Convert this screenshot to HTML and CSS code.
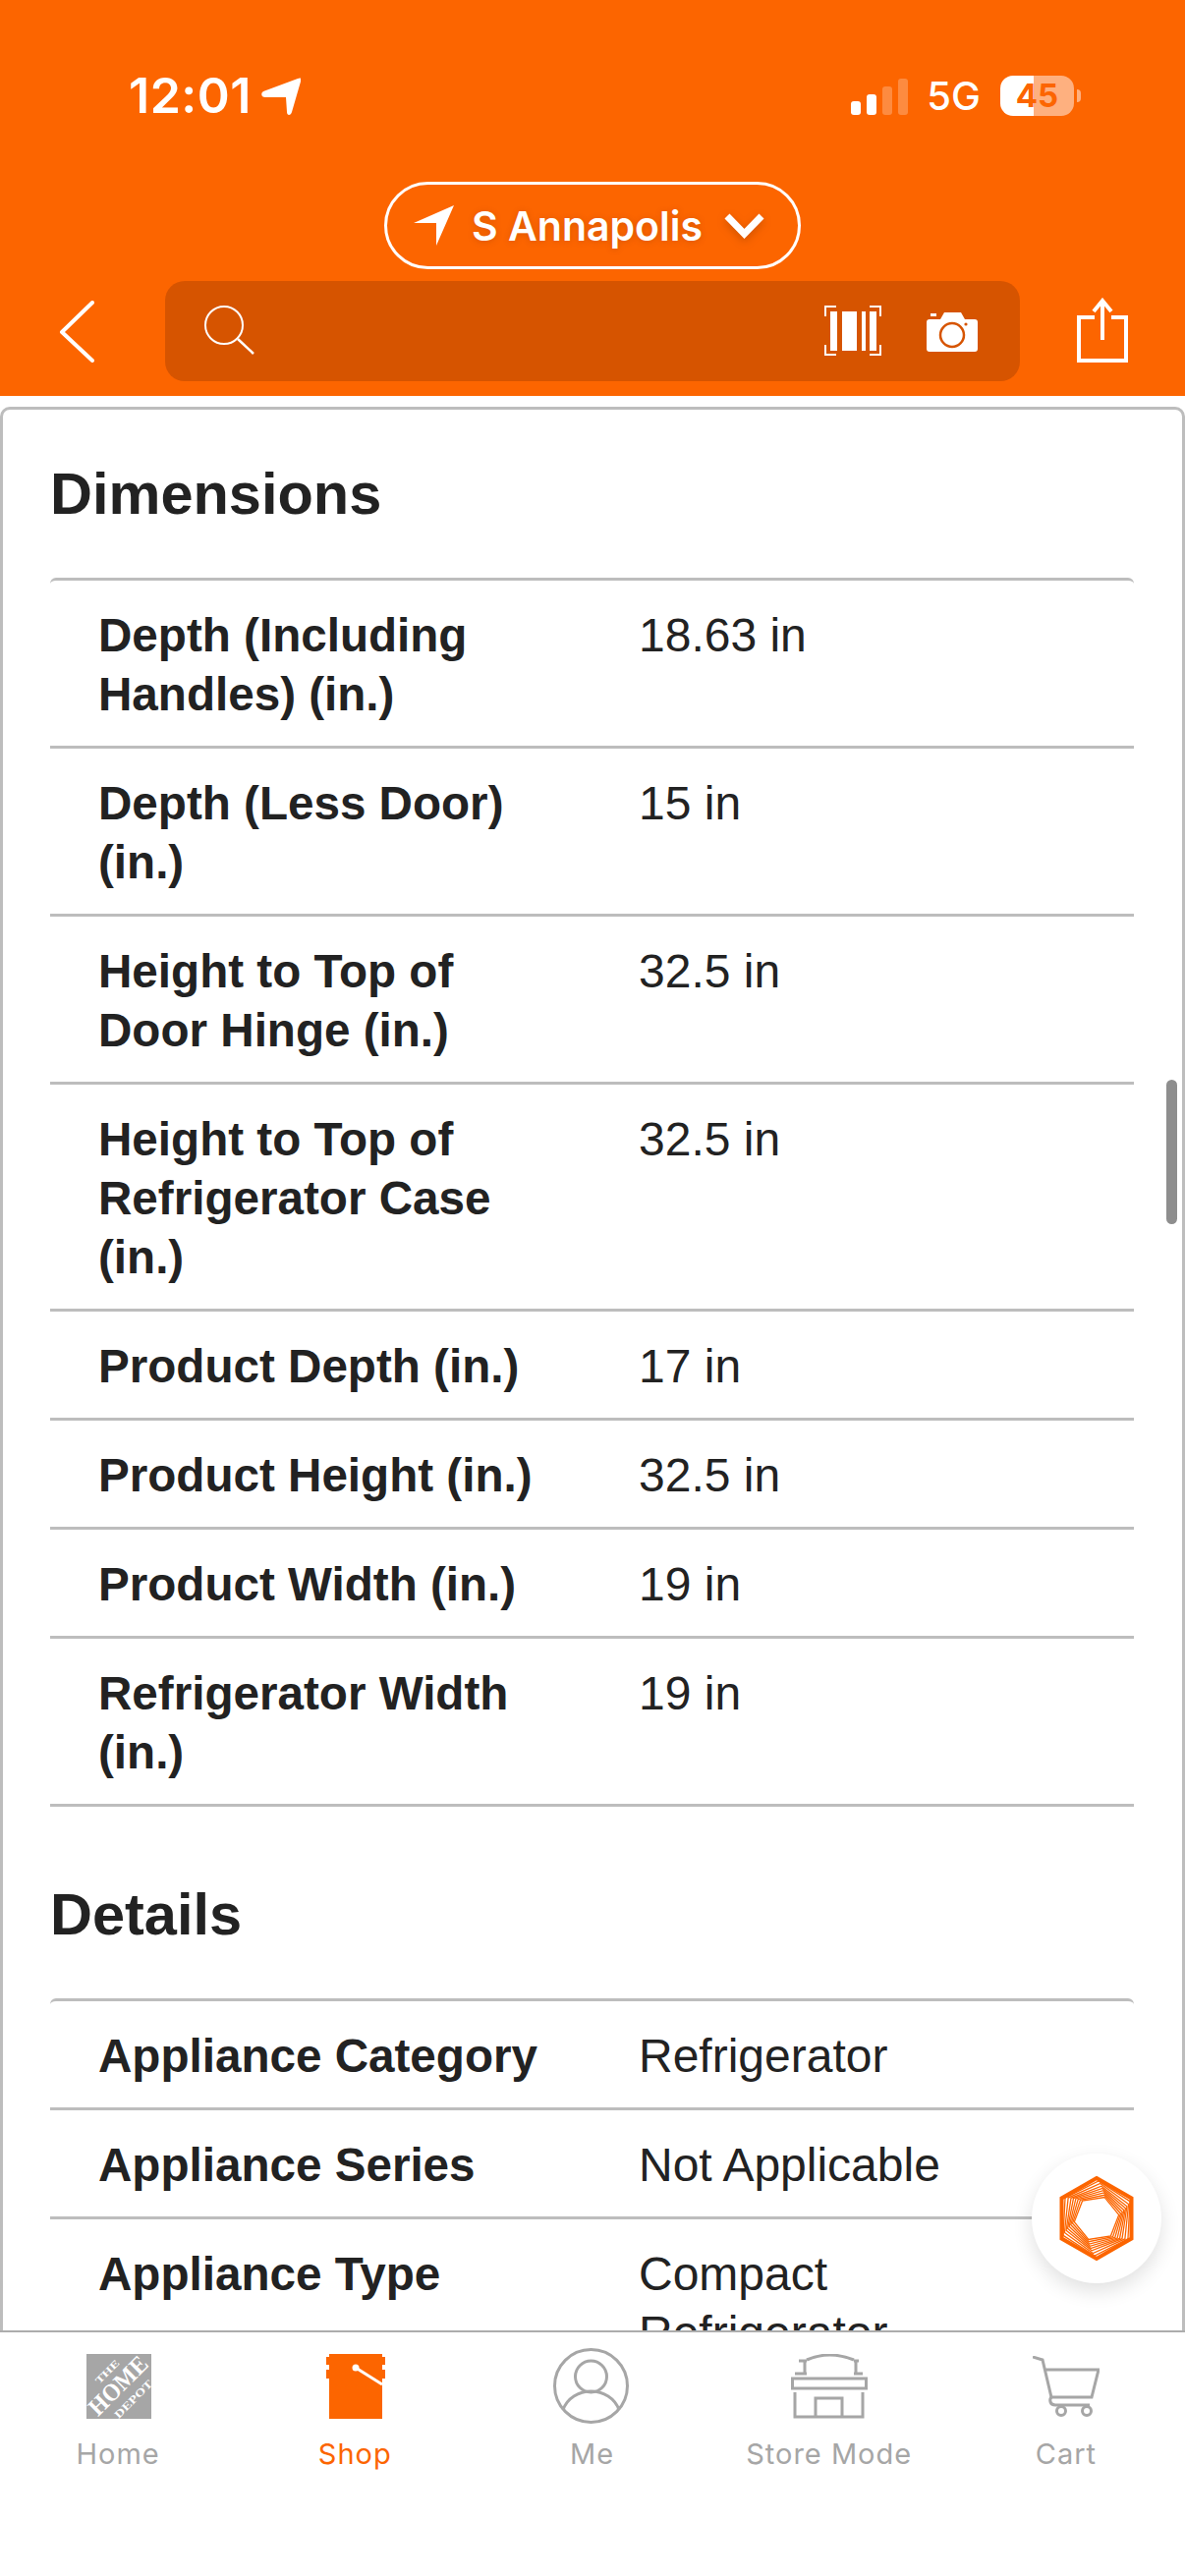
FILE: index.html
```html
<!DOCTYPE html>
<html lang="en">
<head>
<meta charset="utf-8">
<title>Specifications</title>
<link rel="stylesheet" href="styles.css">
</head>
<body>
<header class="header">
  <div class="status">
    <div class="status-left">
      <span class="time">12:01</span>
      <svg class="loc" viewBox="0 0 40 38"><path d="M37 1C40-.5 41 1 40 4L31 35C30 39 26 39 26 35L25 20H4C0 20-1 16 2 14Z" fill="#fff"/></svg>
    </div>
    <div class="status-right">
      <div class="signal"><i class="b1"></i><i class="b2"></i><i class="b3"></i><i class="b4"></i></div>
      <span class="net">5G</span>
      <div class="battery"><span>45</span></div>
      <i class="nub"></i>
    </div>
  </div>
  <div class="pill-row">
    <div class="pill">
      <svg class="pill-arrow" viewBox="0 0 41 41"><path d="M41 0L23 41 23 18H0Z" fill="#fff"/></svg>
      <span class="pill-text">S Annapolis</span>
      <svg class="pill-chev" viewBox="0 0 43 27"><path d="M4 4L21.5 22 39 4" fill="none" stroke="#fff" stroke-width="7"/></svg>
    </div>
  </div>
  <div class="search-row">
    <svg class="back" viewBox="0 0 36 63"><path d="M34 2L3 32 34 61" fill="none" stroke="#fff" stroke-width="4" stroke-linecap="round" stroke-linejoin="round"/></svg>
    <div class="search">
      <svg class="glass" viewBox="0 0 51 50"><circle cx="20" cy="20" r="19" fill="none" stroke="#fff" stroke-width="2"/><path d="M34 34L50 49" stroke="#fff" stroke-width="2.5"/></svg>
      <svg class="barcode" viewBox="0 0 58 51">
        <path d="M1 11V1H12M46 1H57V11M1 40V50H12M46 50H57V40" fill="none" stroke="#fff" stroke-width="2"/>
        <path d="M6 6H13V46H6ZM18 6H33V46H18ZM38 6H42V46H38ZM46 6H53V46H46Z" fill="#fff"/>
      </svg>
      <svg class="camera" viewBox="0 0 52 40">
        <path d="M3 7H14L18 0H35L39 7H49C51 7 52 8 52 10V37C52 39 51 40 49 40H3C1 40 0 39 0 37V10C0 8 1 7 3 7Z" fill="#fff"/>
        <rect x="4" y="1" width="6" height="3" fill="#fff"/>
        <circle cx="26" cy="23" r="12" fill="#fff" stroke="#d65400" stroke-width="2.5"/>
        <circle cx="40" cy="12" r="1.6" fill="#d65400"/>
      </svg>
    </div>
    <svg class="share" viewBox="0 0 52 66"><path d="M18 20H2V64H50V20H35" fill="none" stroke="#fff" stroke-width="4"/><path d="M26 43V3M17 14L26 3 35 14" fill="none" stroke="#fff" stroke-width="4"/></svg>
  </div>
</header>

<main class="main">
  <div class="card">
    <h2 class="title">Dimensions</h2>
    <div class="table">
      <div class="row"><div class="key">Depth (Including Handles) (in.)</div><div class="val">18.63 in</div></div>
      <div class="row"><div class="key">Depth (Less Door) (in.)</div><div class="val">15 in</div></div>
      <div class="row"><div class="key">Height to Top of Door Hinge (in.)</div><div class="val">32.5 in</div></div>
      <div class="row"><div class="key">Height to Top of Refrigerator Case (in.)</div><div class="val">32.5 in</div></div>
      <div class="row"><div class="key">Product Depth (in.)</div><div class="val">17 in</div></div>
      <div class="row"><div class="key">Product Height (in.)</div><div class="val">32.5 in</div></div>
      <div class="row"><div class="key">Product Width (in.)</div><div class="val">19 in</div></div>
      <div class="row"><div class="key">Refrigerator Width (in.)</div><div class="val">19 in</div></div>
    </div>
    <h2 class="title title-next">Details</h2>
    <div class="table">
      <div class="row"><div class="key">Appliance Category</div><div class="val">Refrigerator</div></div>
      <div class="row"><div class="key">Appliance Series</div><div class="val">Not Applicable</div></div>
      <div class="row"><div class="key">Appliance Type</div><div class="val">Compact Refrigerator</div></div>
    </div>
  </div>
  <div class="scrollbar"></div>
  <div class="fab">
    <svg class="hex" viewBox="-40 -45 80 90">
      <defs><polygon id="hx" vector-effect="non-scaling-stroke" points="0,-41 35.5,-20.5 35.5,20.5 0,41 -35.5,20.5 -35.5,-20.5"/></defs>
      <g fill="none" stroke="#fc6500">
        <use href="#hx" stroke-width="4"/>
        <g stroke-width="1.3">
          <use href="#hx" transform="rotate(3) scale(.93)"/>
          <use href="#hx" transform="rotate(6) scale(.87)"/>
          <use href="#hx" transform="rotate(8.500) scale(.81)"/>
          <use href="#hx" transform="rotate(11) scale(.76)"/>
          <use href="#hx" transform="rotate(13.500) scale(.71)"/>
          <use href="#hx" transform="rotate(16) scale(.66)"/>
          <use href="#hx" transform="rotate(18.500) scale(.61)"/>
          <use href="#hx" transform="rotate(21) scale(.56)"/>
        </g>
      </g>
    </svg>
  </div>
</main>

<nav class="tabs">
  <div class="tab">
    <div class="tab-icon">
      <svg class="logo" viewBox="0 0 66 66">
        <rect width="66" height="66" fill="#a6a6a6"/>
        <g fill="#fff" font-family="'Liberation Serif',serif" font-weight="700" text-anchor="middle">
          <text transform="translate(23.500 20.500) rotate(-45)" font-size="10" textLength="30" lengthAdjust="spacingAndGlyphs">THE</text>
          <text transform="translate(38 38) rotate(-45)" font-size="25" textLength="74" lengthAdjust="spacingAndGlyphs">HOME</text>
          <text transform="translate(50.500 48.500) rotate(-45)" font-size="11" textLength="50" lengthAdjust="spacingAndGlyphs">DEPOT</text>
        </g>
      </svg>
    </div>
    <span class="tab-label">Home</span>
  </div>
  <div class="tab active">
    <div class="tab-icon">
      <svg class="bucket" viewBox="0 0 60 66">
        <path d="M3 0H57V3H60V11H57V16H60V25H57V66H3V25H0V16H3V11H0V3H3Z" fill="#fc6500"/>
        <circle cx="30" cy="14" r="3.500" fill="#fff"/>
        <path d="M30 14L57 31" stroke="#fff" stroke-width="3"/>
      </svg>
    </div>
    <span class="tab-label">Shop</span>
  </div>
  <div class="tab">
    <div class="tab-icon">
      <svg class="me" viewBox="0 0 77 77" fill="none" stroke="#a6a6a6" stroke-width="3">
        <circle cx="38.500" cy="38.500" r="37"/>
        <ellipse cx="38.500" cy="29" rx="16" ry="16"/>
        <path d="M10 63C14 51 26 44 38.500 44 51 44 63 51 67 63"/>
      </svg>
    </div>
    <span class="tab-label">Me</span>
  </div>
  <div class="tab">
    <div class="tab-icon">
      <svg class="store" viewBox="0 0 78 66" fill="none" stroke="#a6a6a6" stroke-width="3">
        <path d="M16 6Q39-4 64 6M8 7H16M64 7H69M14 6V20M66 6V20M4 20H16M64 20H73"/>
        <rect x="1.500" y="25" width="75" height="10"/>
        <path d="M4 39V64H73V39M25 64V45H52V64"/>
      </svg>
    </div>
    <span class="tab-label">Store Mode</span>
  </div>
  <div class="tab">
    <div class="tab-icon">
      <svg class="cart" viewBox="0 0 68 62" fill="none" stroke="#a6a6a6" stroke-width="3">
        <path d="M0 1L10 4 19 42H60L67 14H13"/>
        <path d="M19 42C17 44 17 50 23 50H58"/>
        <circle cx="29" cy="56" r="4.500"/>
        <circle cx="55" cy="56" r="4.500"/>
      </svg>
    </div>
    <span class="tab-label">Cart</span>
  </div>
</nav>
</body>
</html>
```
FILE: styles.css
```css
* { box-sizing: border-box; }
html, body { margin: 0; padding: 0; }
body {
  width: 1206px;
  height: 2622px;
  display: flex;
  flex-direction: column;
  overflow: hidden;
  background: #fff;
  font-family: "Liberation Sans", Arial, sans-serif;
  color: #222;
}

/* header */
.header {
  height: 403px;
  flex: none;
  background: #fc6500;
  padding-top: 77px;
  color: #fff;
}
.status {
  height: 41px;
  display: flex;
  justify-content: space-between;
  align-items: center;
  padding: 0 106px 0 131px;
}
.status-left, .status-right { display: flex; align-items: center; }
.time {
  font: 600 50px/41px Inter, sans-serif;
  letter-spacing: .5px;
}
.loc { width: 40px; height: 38px; margin-left: 10px; }
.signal { display: flex; align-items: flex-end; gap: 6px; height: 37px; margin-right: 19px; margin-top: 2px; }
.signal i { width: 10px; border-radius: 3px; background: #fff; display: block; }
.signal .b1 { height: 14px; }
.signal .b2 { height: 21px; }
.signal .b3 { height: 29px; opacity: .25; }
.signal .b4 { height: 37px; opacity: .25; }
.net { font: 500 40px/41px Inter, sans-serif; margin-right: 20px; }
.battery {
  width: 75px;
  height: 41px;
  border-radius: 13px;
  background: linear-gradient(90deg, #fff 0 34px, #feb07f 34px);
  color: #fc6500;
  font: 700 33px/41px Inter, sans-serif;
  text-align: center;
}
.nub { width: 4px; height: 13px; margin-left: 3px; background: #feb07f; border-radius: 0 5px 5px 0; display: block; }

.pill-row { display: flex; justify-content: center; margin-top: 67px; }
.pill {
  width: 424px;
  height: 89px;
  border: 3px solid #fff;
  border-radius: 45px;
  display: flex;
  align-items: center;
  padding-left: 27px;
}
.pill-arrow { width: 41px; height: 41px; flex: none; }
.pill-text { font: 600 41px/50px Inter, sans-serif; margin-left: 18px; text-shadow: 0 1px 6px rgba(120,50,0,.25); white-space: nowrap; }
.pill-chev { width: 43px; height: 27px; margin-left: 21px; flex: none; filter: drop-shadow(0 3px 4px rgba(120,50,0,.35)); }

.search-row {
  display: flex;
  align-items: center;
  margin-top: 12px;
  height: 102px;
  padding-left: 60px;
}
.back { width: 36px; height: 63px; flex: none; }
.search {
  width: 870px;
  height: 102px;
  margin-left: 72px;
  background: #d65400;
  border-radius: 20px;
  display: flex;
  align-items: center;
  padding: 0 43px 0 40px;
  flex: none;
}
.glass { width: 51px; height: 50px; margin-top: -2px; }
.barcode { width: 58px; height: 51px; margin-left: auto; margin-top: -2px; }
.camera { width: 52px; height: 40px; margin-left: 46px; margin-top: 2px; }
.share { width: 52px; height: 66px; margin-left: 58px; margin-top: -2px; flex: none; }

/* content */
.main { flex: 1; position: relative; overflow: hidden; padding-top: 11px; }
.card {
  border: 3px solid #bdbdbd;
  border-radius: 10px;
  padding: 51px 49px 0 48px;
  min-height: 2400px;
}
.title { margin: 0 0 50px; font: 700 59.5px/70px "Liberation Sans", Arial, sans-serif; color: #222; }
.title-next { margin-top: 75px; }
.table { border-top: 3px solid #bdbdbd; border-radius: 6px; }
.row {
  display: grid;
  grid-template-columns: 550px 1fr;
  padding: 26px 49px 22px;
  border-bottom: 3px solid #bdbdbd;
  font-size: 48px;
  line-height: 60px;
}
.key { font-weight: 700; font-size: 47.6px; padding-right: 80px; }
.val { padding-right: 40px; }

.scrollbar {
  position: absolute;
  top: 696px;
  right: 8px;
  width: 11px;
  height: 147px;
  border-radius: 6px;
  background: #8e8e8e;
}
.fab {
  position: absolute;
  left: 1050px;
  top: 1789px;
  width: 132px;
  height: 132px;
  border-radius: 50%;
  background: #fff;
  box-shadow: 0 8px 20px rgba(0,0,0,.12);
  display: flex;
  align-items: center;
  justify-content: center;
}
.hex { width: 80px; height: 90px; }

/* tab bar */
.tabs {
  height: 250px;
  flex: none;
  background: #fff;
  border-top: 2px solid #adadad;
  display: grid;
  grid-template-columns: repeat(5, 1fr);
  padding-top: 16px;
  position: relative;
}
.tab { display: flex; flex-direction: column; align-items: center; color: #a6a6a6; }
.tab.active { color: #fc6500; }
.tab-icon { height: 77px; display: flex; align-items: center; justify-content: center; }
.tab-label { font: 400 29px/36px Inter, sans-serif; letter-spacing: 1px; margin-top: 13px; margin-left: -1px; }
.logo, .bucket, .store { height: 66px; display: block; }
.logo { width: 66px; }
.bucket { width: 60px; }
.me { width: 77px; height: 77px; margin-left: -3px; }
.store { width: 78px; }
.cart { width: 68px; height: 62px; }
```
